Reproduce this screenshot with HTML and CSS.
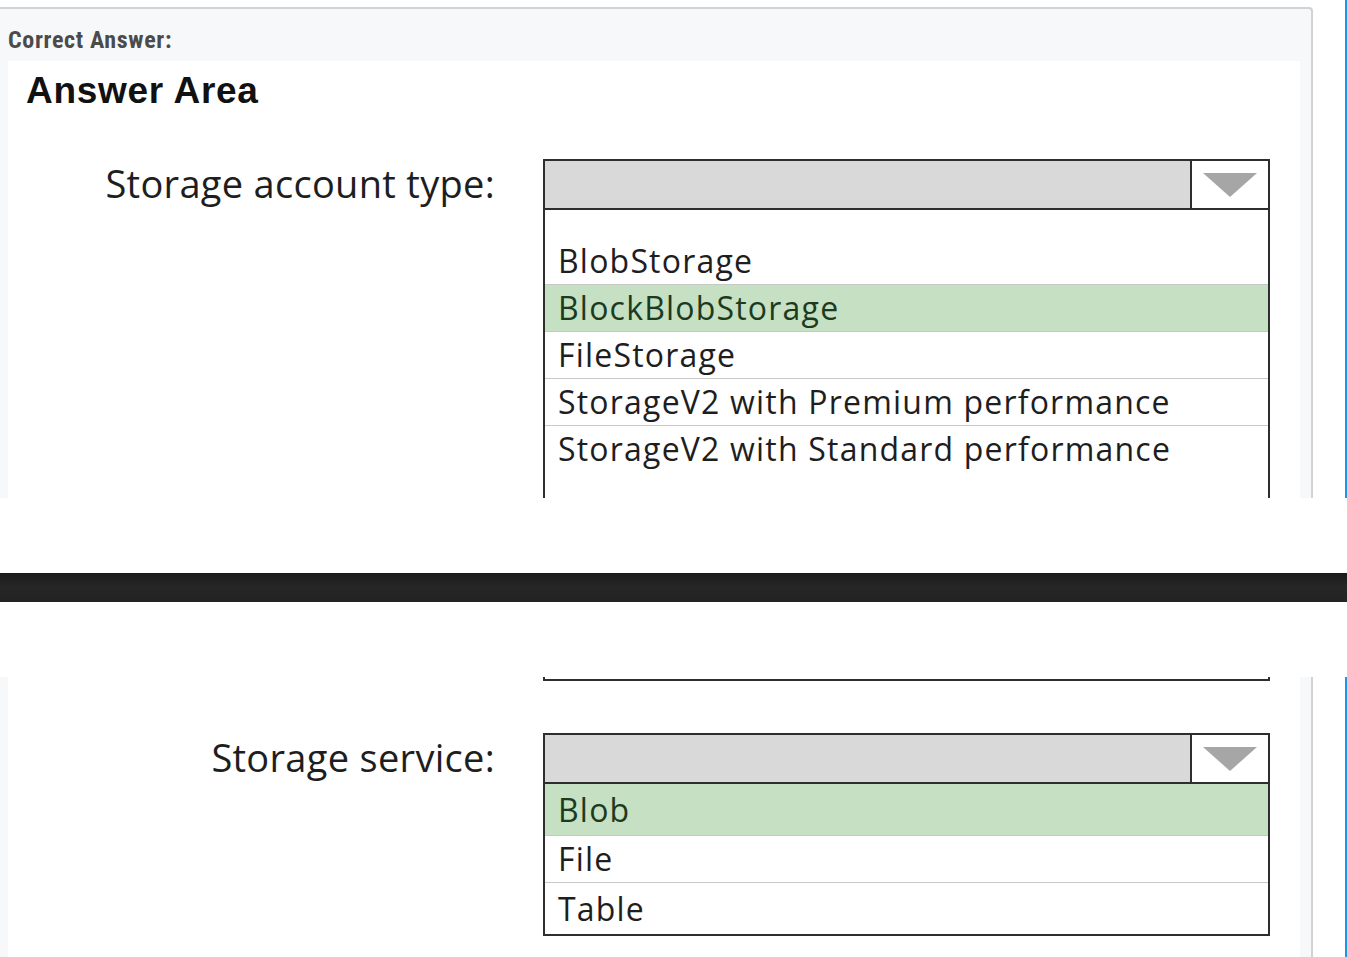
FILE: index.html
```html
<!DOCTYPE html>
<html lang="en">
<head>
<meta charset="utf-8">
<title>Correct Answer</title>
<link rel="stylesheet" href="styles.css">
</head>
<body>
<section class="shot shot-top">
  <div class="panel panel-top">
    <div class="caption">Correct Answer:</div>
    <div class="answer">
      <h2 class="title">Answer Area</h2>
      <div class="row">
        <div class="label">Storage account type:</div>
        <div class="dd">
          <div class="dd-head">
            <div class="dd-field"></div>
            <div class="dd-arrow"><svg width="54" height="24" viewBox="0 0 54 24"><polygon points="0,0 54,0 27,24" fill="#a6a6a6"/></svg></div>
          </div>
          <div class="dd-list long">
            <div class="opt">BlobStorage</div>
            <div class="opt sel">BlockBlobStorage</div>
            <div class="opt">FileStorage</div>
            <div class="opt">StorageV2 with Premium performance</div>
            <div class="opt last">StorageV2 with Standard performance</div>
          </div>
        </div>
      </div>
    </div>
  </div>
  <div class="stripe"></div>
</section>
<div class="gap"></div>
<div class="darkbar"></div>
<div class="gap"></div>
<section class="shot shot-bottom">
  <div class="panel panel-bottom">
    <div class="answer">
      <div class="dd-end"></div>
      <div class="row row2">
        <div class="label">Storage service:</div>
        <div class="dd">
          <div class="dd-head">
            <div class="dd-field"></div>
            <div class="dd-arrow"><svg width="54" height="24" viewBox="0 0 54 24"><polygon points="0,0 54,0 27,24" fill="#a6a6a6"/></svg></div>
          </div>
          <div class="dd-list">
            <div class="opt sel tall">Blob</div>
            <div class="opt">File</div>
            <div class="opt last tall">Table</div>
          </div>
        </div>
      </div>
    </div>
  </div>
  <div class="stripe"></div>
</section>
</body>
</html>
```
FILE: styles.css
```css
html, body {
  margin: 0;
  padding: 0;
  background: #ffffff;
}

.shot {
  display: flex;
  justify-content: space-between;
  overflow: hidden;
}

.shot-top {
  height: 498px;
}

.shot-bottom {
  height: 280px;
}

.stripe {
  width: 2px;
  background: #1a96ec;
}

.panel {
  width: 1313px;
  box-sizing: border-box;
  background: #f7f8fa;
  border-right: 2px solid #d2d2d2;
  padding: 0 11px 0 8px;
  display: flex;
  flex-direction: column;
  overflow: hidden;
}

.panel-top {
  margin-top: 7px;
  border-top: 2px solid #d2d2d2;
  border-top-right-radius: 4px;
}

.caption {
  font-family: "Roboto Condensed", Roboto, "Liberation Sans", sans-serif;
  font-weight: 700;
  font-size: 24px;
  line-height: 26px;
  letter-spacing: 0.65px;
  color: #4b4b4b;
  padding: 18px 0 8px 0;
}

.answer {
  flex: 1;
  background: #ffffff;
  overflow: hidden;
}

.title {
  margin: 9px 0 0 18px;
  font-family: "Liberation Sans", Arial, sans-serif;
  font-weight: 700;
  font-size: 37px;
  line-height: 42px;
  letter-spacing: 0.7px;
  color: #111111;
}

.row {
  display: grid;
  grid-template-columns: 487px 727px;
  column-gap: 48px;
  margin-top: 47px;
  align-items: start;
}

.row2 {
  margin-top: 52px;
}

.label {
  text-align: right;
  font-family: "Open Sans", Lato, sans-serif;
  font-size: 38px;
  line-height: 48px;
  letter-spacing: 0.3px;
  color: #1e1e1e;
}

.dd {
  border: 2px solid #2e2e2e;
  box-sizing: border-box;
  width: 727px;
  background: #ffffff;
}

.dd-head {
  display: flex;
  height: 47px;
  border-bottom: 2px solid #2e2e2e;
}

.dd-field {
  flex: 1;
  background: #d9d9d9;
}

.dd-arrow {
  width: 76px;
  border-left: 2px solid #2e2e2e;
  background: #ffffff;
  display: flex;
  align-items: center;
  justify-content: center;
}

.dd-list.long {
  padding-top: 28px;
  height: 400px;
}

.opt {
  height: 46px;
  border-bottom: 1px solid #c8c8c8;
  padding-left: 13px;
  font-family: "Open Sans", Lato, sans-serif;
  font-size: 32px;
  line-height: 46px;
  letter-spacing: 1.2px;
  color: #1e1e1e;
  display: flex;
  align-items: center;
}

.opt.tall {
  height: 51px;
}

.opt.last {
  border-bottom: none;
}

.opt.sel {
  background: #c5e0c3;
  color: #1d3a1e;
}

.dd-end {
  height: 2px;
  margin-left: 535px;
  border: 2px solid #2e2e2e;
  border-top: none;
  width: 723px;
}

.gap {
  height: 75px;
}

.darkbar {
  height: 29px;
  background: linear-gradient(#1a1a1a, #262626 45%, #232323);
}
```
